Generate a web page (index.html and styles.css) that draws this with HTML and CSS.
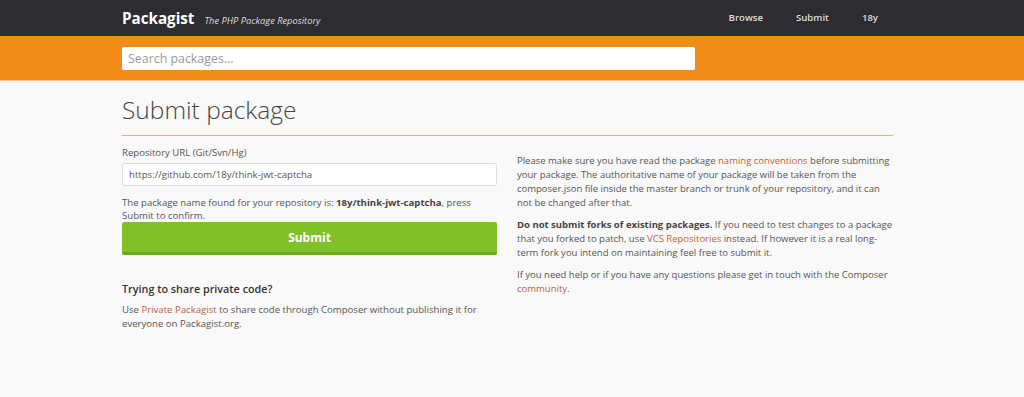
FILE: index.html
```html
<!DOCTYPE html>
<html lang="en">
<head>
<meta charset="utf-8">
<title>Submit package - Packagist</title>
<link rel="stylesheet" href="styles.css">
</head>
<body>
<header class="navbar">
  <div class="container nav-inner">
    <div class="brand">
      <span class="logo">Packagist</span>
      <em class="tagline">The PHP Package Repository</em>
    </div>
    <nav class="nav-links">
      <a href="#">Browse</a>
      <a href="#">Submit</a>
      <a href="#">18y</a>
    </nav>
  </div>
</header>
<div class="search-bar">
  <div class="container">
    <input class="search-input" type="text" placeholder="Search packages...">
  </div>
</div>
<main class="container">
  <h1 class="page-title">Submit package</h1>
  <div class="columns">
    <section class="col-left">
      <label class="field-label">Repository URL (Git/Svn/Hg)</label>
      <input class="url-input" type="text" value="https://github.com/18y/think-jwt-captcha">
      <p class="confirm">The package name found for your repository is: <strong>18y/think-jwt-captcha</strong>, press Submit to confirm.</p>
      <button class="submit-btn">Submit</button>
      <h2 class="private-title">Trying to share private code?</h2>
      <p>Use <a href="#">Private Packagist</a> to share code through Composer without publishing it for everyone on Packagist.org.</p>
    </section>
    <section class="col-right">
      <p>Please make sure you have read the package <a href="#">naming conventions</a> before submitting your package. The authoritative name of your package will be taken from the composer.json file inside the master branch or trunk of your repository, and it can not be changed after that.</p>
      <p><strong>Do not submit forks of existing packages.</strong> If you need to test changes to a package that you forked to patch, use <a href="#">VCS Repositories</a> instead. If however it is a real long-term fork you intend on maintaining feel free to submit it.</p>
      <p>If you need help or if you have any questions please get in touch with the Composer <a href="#">community</a>.</p>
    </section>
  </div>
</main>
</body>
</html>
```
FILE: styles.css
```css
* { box-sizing: border-box; }
html, body { margin: 0; padding: 0; }
body {
  background: #f9f9f9;
  font-family: "Open Sans", "Liberation Sans", sans-serif;
  font-size: 9.6px;
  line-height: 14px;
  color: #555;
}
a { color: #c2613a; text-decoration: none; }
.container {
  width: 771px;
  margin-left: 122px;
}
.navbar {
  background: #2d2c30;
  height: 36px;
}
.nav-inner {
  display: flex;
  align-items: center;
  justify-content: space-between;
  height: 36px;
}
.brand { display: flex; align-items: baseline; gap: 10px; }
.logo {
  color: #fff;
  font-weight: 700;
  font-size: 15.2px;
  line-height: 34px;
}
.tagline {
  color: #ddd;
  font-size: 9.3px;
  font-style: italic;
}
.nav-links { display: flex; gap: 33px; margin-right: 15px; margin-top: -1px; }
.nav-links a {
  color: #ddd;
  font-size: 9.6px;
  font-weight: 600;
}
.search-bar {
  background: #f28d1a;
  height: 45px;
  padding-top: 11px;
  border-bottom: 1px solid #f8c48c;
}
.search-input {
  display: block;
  width: 573px;
  height: 23px;
  border: 0;
  border-radius: 2px;
  background: #fff;
  padding: 0 6px;
  font-family: inherit;
  font-size: 12.4px;
  color: #555;
}
.search-input::placeholder { color: #999; }
.page-title {
  font-weight: 300;
  font-size: 24.5px;
  line-height: 30px;
  color: #444;
  margin: 14px 0 0;
  padding-bottom: 10px;
  border-bottom: 1px solid #f7b15e;
}
.columns {
  display: grid;
  grid-template-columns: 375px 377px;
  gap: 20px;
}
.col-left { padding-top: 10px; }
.field-label { display: block; line-height: 14px; }
.url-input {
  display: block;
  width: 375px;
  height: 23px;
  margin-top: 3px;
  border: 1px solid #ddd;
  border-radius: 3px;
  background: #fff;
  padding: 0 6px;
  font-family: inherit;
  font-size: 9.6px;
  color: #555;
}
.confirm { margin: 10px 0 0; line-height: 13px; }
.confirm strong { color: #444; }
.submit-btn {
  display: block;
  width: 375px;
  height: 33px;
  margin-top: 0;
  border: 0;
  border-bottom: 3px solid #6eaa1f;
  border-radius: 2px;
  background: #80c12a;
  color: #fff;
  font-family: inherit;
  font-weight: 700;
  font-size: 12px;
  padding: 0;
}
.private-title {
  font-size: 10.8px;
  font-weight: 600;
  color: #333;
  margin: 26px 0 6px;
  line-height: 16px;
}
.col-left p, .col-right p { margin: 0 0 8px; }
.col-left .confirm { margin: 10px 0 0; }
.col-right { padding-top: 18px; font-size: 9.5px; }
.col-right strong { color: #444; }
```
